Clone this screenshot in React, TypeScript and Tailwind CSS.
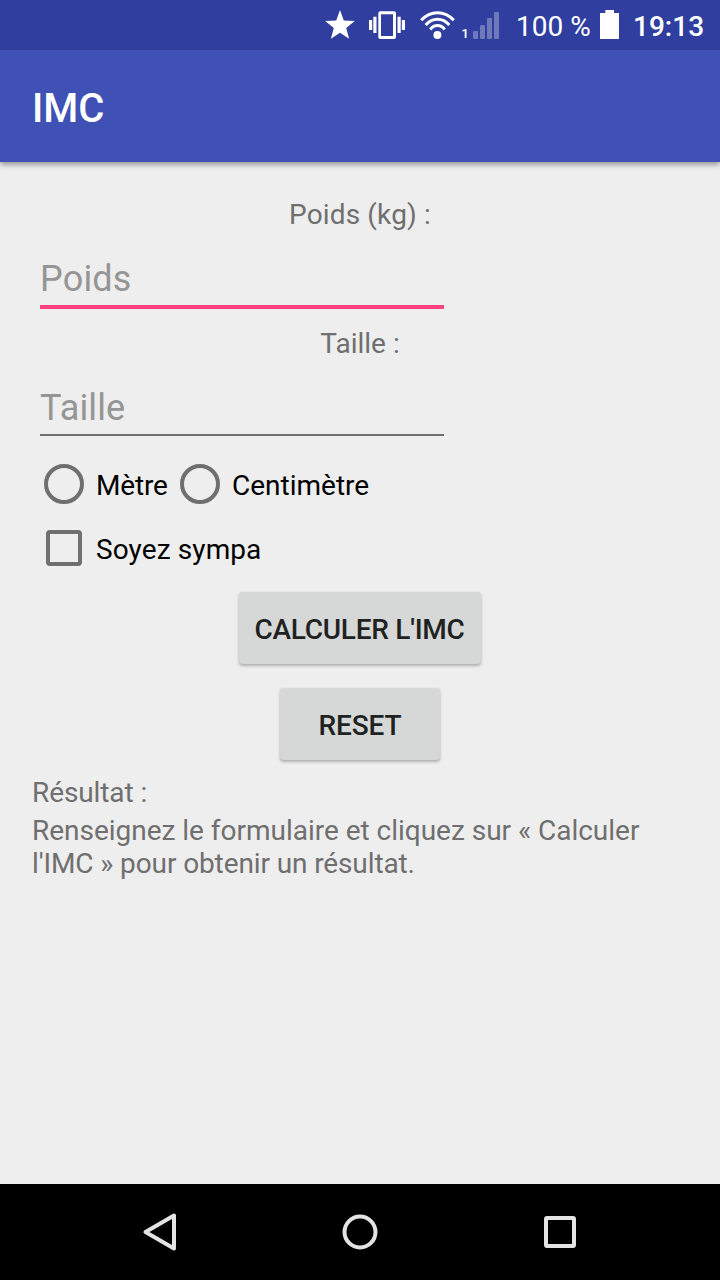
import React from "react";

function StatusIcons() {
  return (
    <svg className="ml-[325px] block h-[50px] w-[175px] shrink-0" viewBox="325 0 175 50" fill="white">
      <path d="M340 10l3.800 10.400 11 .6-8.600 7 2.900 10.700-9.100-5.900-9.100 5.900 2.900-10.700-8.600-7 11-.6z" />
      <path fillRule="evenodd" d="M380.300 11.300h13.700q2 0 2 2v23.700q0 2-2 2h-13.700q-2 0-2-2V13.300q0-2 2-2zM381 14.200v21.800h12V14.200z" />
      <path d="M373.300 16.700h3.200v16.300h-3.200zM369 20h3.200v10h-3.200zM397.500 16.700h3.200v16.300h-3.200zM401.800 20h3.200v10h-3.200z" />
      <g fill="none" stroke="white" strokeWidth="3">
        <path d="M421.200 20.300C430.500 10.300 444.500 10.300 453.800 20.300" />
        <path d="M425.700 24.900C432.500 17.300 442.500 17.300 449.300 24.900" />
        <path d="M430.300 29.500C434.300 24.300 440.700 24.300 444.700 29.500" />
      </g>
      <circle cx="437.400" cy="35" r="4" />
      <text x="461.300" y="38" fontSize="13.500" fontWeight="500" fontFamily="Roboto, sans-serif">1</text>
      <g fillOpacity=".3">
        <rect x="473" y="31" width="5" height="8" rx="1" />
        <rect x="480" y="25" width="5" height="14" rx="1" />
        <rect x="487" y="18" width="5" height="21" rx="1" />
        <rect x="494" y="12" width="5" height="27" rx="1" />
      </g>
    </svg>
  );
}

export default function App() {
  return (
    <div className="flex h-[1280px] w-[720px] flex-col overflow-hidden bg-[#eeeeee] font-[Roboto,sans-serif] text-[28px] leading-[33px] text-[#6f6f6f]">
      <div className="flex h-[50px] shrink-0 items-center bg-[#303f9f] text-white">
        <StatusIcons />
        <span className="ml-4 w-[76px] whitespace-nowrap pt-0.5">100 %</span>
        <svg className="ml-2 h-[30px] w-5 shrink-0" viewBox="0 0 20 30" fill="white"><path d="M5.300 0h8.700v3h5v26H0V3h5.300z" /></svg>
        <span className="ml-[13px] whitespace-nowrap pt-0.5 font-medium">19:13</span>
      </div>
      <header className="z-10 flex h-28 shrink-0 items-center bg-[#3f51b5] px-8 pt-1 text-[40px] font-medium text-white shadow-[0_3px_5px_rgba(0,0,0,0.35)]">IMC</header>
      <main className="flex flex-1 flex-col px-8 pt-9">
        <label className="text-center tracking-[0.15px]">Poids (kg) :</label>
        <input placeholder="Poids" className="ml-2 mt-[17px] h-[61px] w-[404px] border-b-4 border-[#ff4081] bg-transparent pt-1 text-[36px] tracking-[0.2px] text-black outline-none placeholder:text-[#959595]" />
        <label className="mt-[18px] text-center">Taille :</label>
        <input placeholder="Taille" className="ml-2 mt-[17px] h-[59px] w-[404px] border-b-2 border-[#6f6f6f] bg-transparent pt-1 text-[36px] tracking-[0.15px] text-black outline-none placeholder:text-[#959595]" />
        <div className="mt-4 flex h-16 items-center text-black">
          <span className="ml-3 size-10 rounded-full border-4 border-[#6f6f6f]" />
          <span className="ml-3 w-[72px] pt-0.5 tracking-[-0.15px]">Mètre</span>
          <span className="ml-3 size-10 rounded-full border-4 border-[#6f6f6f]" />
          <span className="ml-3 pt-0.5">Centimètre</span>
        </div>
        <div className="flex h-16 items-center text-black">
          <span className="ml-[14px] size-9 rounded-[4px] border-4 border-[#6f6f6f]" />
          <span className="ml-[14px] pt-0.5 tracking-[0.1px]">Soyez sympa</span>
        </div>
        <button className="mr-px mt-3 h-[72px] w-[242px] shrink-0 self-center whitespace-nowrap rounded-[4px] bg-[#d6d8d7] pt-0.5 font-medium tracking-[-0.25px] text-[#202121] shadow-[0_2px_3px_rgba(0,0,0,0.25),0_0_1px_rgba(0,0,0,0.15)]">CALCULER L'IMC</button>
        <button className="mt-6 h-[72px] w-40 shrink-0 self-center rounded-[4px] bg-[#d6d8d7] pt-0.5 font-medium tracking-[-0.1px] text-[#202121] shadow-[0_2px_3px_rgba(0,0,0,0.25),0_0_1px_rgba(0,0,0,0.15)]">RESET</button>
        <p className="mt-4 tracking-[-0.1px]">Résultat :</p>
        <p className="mt-[5px] whitespace-nowrap tracking-[-0.02px]">Renseignez le formulaire et cliquez sur « Calculer<br /><span className="tracking-[-0.11px]">l'IMC » pour obtenir un résultat.</span></p>
      </main>
      <nav className="h-24 shrink-0 bg-black">
        <svg className="h-24 w-[720px]" viewBox="0 0 720 96" fill="none" stroke="#e4e4e4" strokeWidth="4" strokeLinejoin="round">
          <path d="M174 31.500v33L145.500 48z" /><circle cx="360" cy="48" r="15.500" /><rect x="546" y="34" width="28" height="28" rx="1" />
        </svg>
      </nav>
    </div>
  );
}
